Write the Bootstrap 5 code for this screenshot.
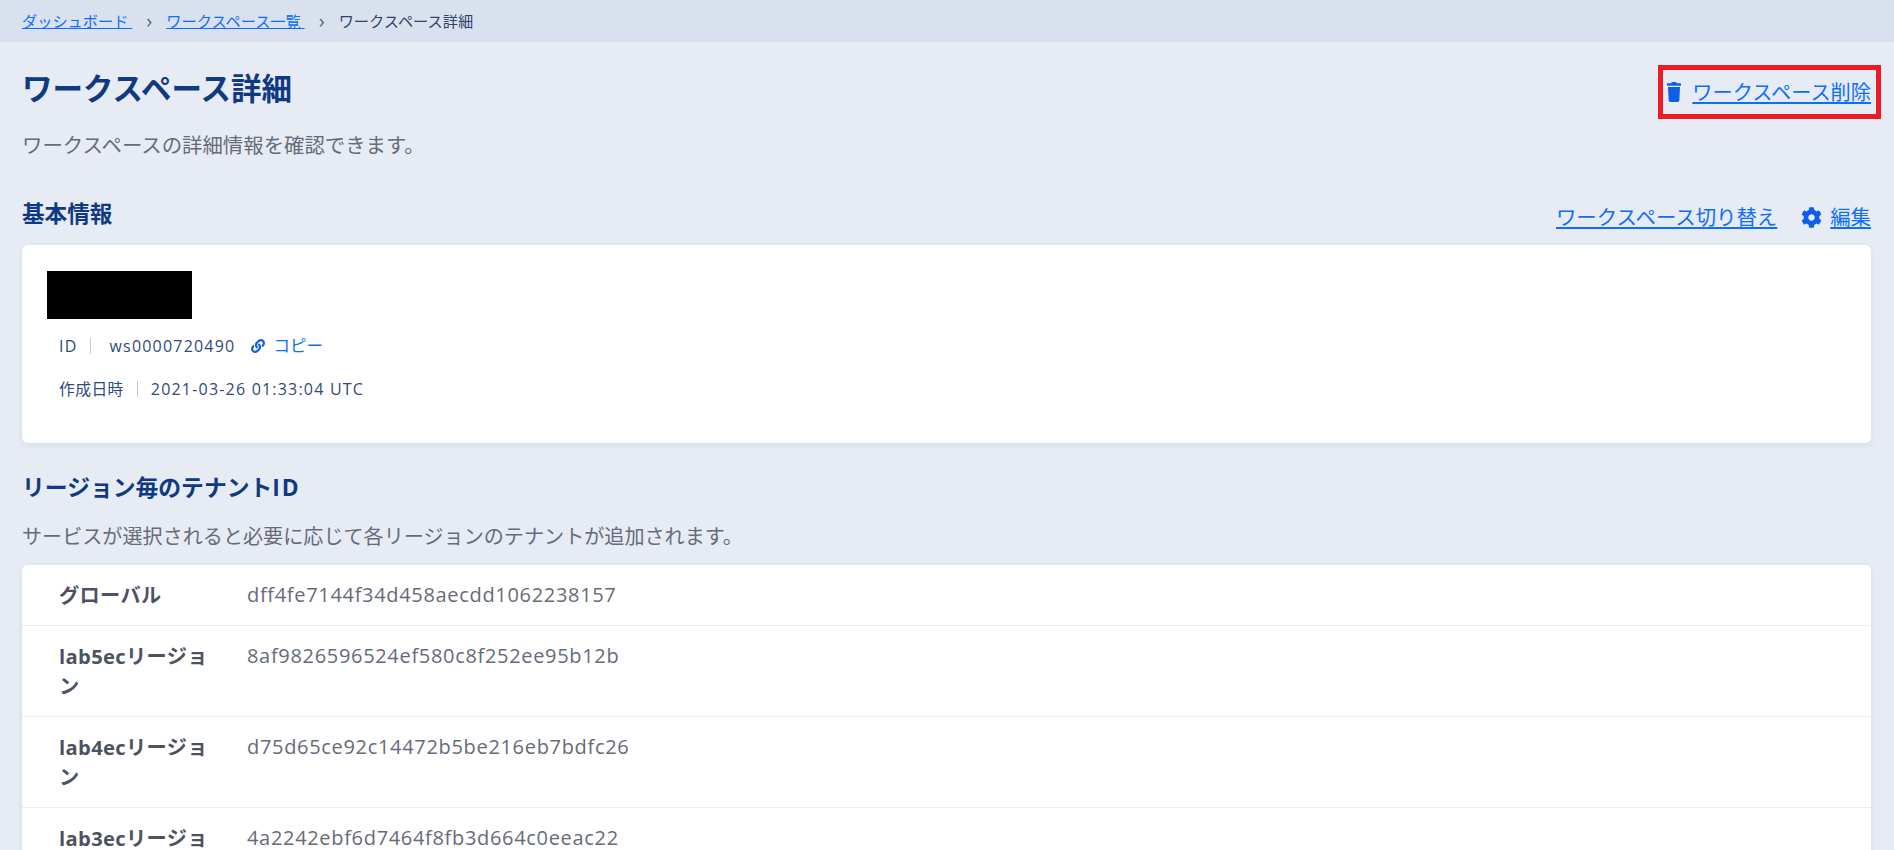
<!DOCTYPE html>
<html lang="ja">
<head>
<meta charset="utf-8">
<title>ワークスペース詳細</title>
<link href="https://cdn.jsdelivr.net/npm/bootstrap@5.3.0/dist/css/bootstrap.min.css" rel="stylesheet">
<style>
body{background:#e6ebf4;font-family:"Open Sans","Noto Sans CJK JP",sans-serif;color:#666b7a}
a{color:#0d6efd}
.crumbs{background:#dae1ee;height:42px;padding:0 22px;align-items:center;margin:0;font-size:15.2px;--bs-breadcrumb-divider:'›';--bs-breadcrumb-divider-color:#5b6478;--bs-breadcrumb-item-padding-x:14px;--bs-breadcrumb-margin-bottom:0}
.crumbs .breadcrumb-item+.breadcrumb-item::before{font-size:20px;line-height:22px}
.crumbs .breadcrumb-item.active{color:#2f4468}
.pagebody{padding:0 23px 0 22px}
.pagehead{padding-top:22px;height:131px}
.pagetitle{font-size:30.5px;line-height:48px;font-weight:700;color:#0f3a82;margin:0}
.pagedesc{font-size:20.4px;line-height:30px;margin:18px 0 0}
.delbox{border:5px solid #ed1c24;height:54px;width:223px;margin:1px -10px 0 0;font-size:20.2px;padding:0 5px 0 4px}
.delbox a,.sechead a{white-space:nowrap}
.ico{fill:#0d5fe8;flex:none}
.sechead{height:72px;align-items:flex-start;padding-top:27px}
.secname{font-size:22.6px;line-height:28px;font-weight:700;color:#0f3a82;margin:0}
.secnav{font-size:20.4px;line-height:28px;padding-top:3px}
.infocard{height:198px;border:0;border-radius:6px;box-shadow:0 2px 6px rgba(40,60,110,.08);padding:26px 25px 0}
.redact{width:145px;height:48px;background:#000}
.metaline{font-size:15.8px;line-height:24px;color:#2f4a7c;padding-left:12px;letter-spacing:.4px}
.metaline a{text-decoration:none;letter-spacing:0;font-size:16.5px}
.metaid{margin-top:7px}
.metadate{margin-top:19px}
.metaval{font-size:16px;letter-spacing:1.2px}
.sep{width:1px;height:16px;background:#c5c8cf;margin:0 13px}
.sepwide{margin-right:18px}
.tenanthead{font-size:22.8px;line-height:30px;font-weight:700;color:#0f3a82;margin:0;padding-top:30px}
.tenanthead span{letter-spacing:2px}
.tenantdesc{font-size:20.1px;line-height:30px;margin:19px 0 0;height:43px}
.tenantcard{border:0;border-radius:6px 6px 0 0;box-shadow:0 2px 6px rgba(40,60,110,.08)}
.tenantrow{border-color:#e9edf4;padding:15px 37px;font-size:20px;line-height:30px;color:#666b7a}
.tenantlabel{width:160px;margin-right:28px;font-weight:700;color:#4d5263;flex:none;font-size:20.2px;letter-spacing:.35px}
.tenantid{letter-spacing:.68px}
</style>
</head>
<body class="vh-100 overflow-hidden">
<nav aria-label="breadcrumb">
  <ol class="breadcrumb crumbs d-flex">
    <li class="breadcrumb-item"><a href="#">ダッシュボード&nbsp;</a></li>
    <li class="breadcrumb-item"><a href="#">ワークスペース一覧&nbsp;</a></li>
    <li class="breadcrumb-item active" aria-current="page">ワークスペース詳細</li>
  </ol>
</nav>
<main class="pagebody">
  <div class="pagehead d-flex justify-content-between align-items-start">
    <div>
      <h1 class="pagetitle">ワークスペース詳細</h1>
      <p class="pagedesc">ワークスペースの詳細情報を確認できます。</p>
    </div>
    <div class="delbox d-flex align-items-center justify-content-between">
      <svg class="ico" width="14" height="20" viewBox="0 0 448 512" preserveAspectRatio="none" aria-hidden="true"><path d="M432 32H312l-9.4-18.7A24 24 0 0 0 281.1 0H166.8a23.72 23.72 0 0 0-21.4 13.3L136 32H16A16 16 0 0 0 0 48v32a16 16 0 0 0 16 16h416a16 16 0 0 0 16-16V48a16 16 0 0 0-16-16zM53.2 467a48 48 0 0 0 47.9 45h245.8a48 48 0 0 0 47.9-45L416 128H32z"/></svg>
      <a href="#">ワークスペース削除</a>
    </div>
  </div>
  <div class="sechead d-flex justify-content-between">
    <h2 class="secname">基本情報</h2>
    <div class="secnav d-flex align-items-center">
      <a href="#">ワークスペース切り替え</a>
      <svg class="ico ms-4 me-2" width="21" height="21" viewBox="0 0 512 512" aria-hidden="true"><path d="M487.4 315.7l-42.6-24.6c4.3-23.2 4.3-47 0-70.2l42.6-24.6c4.9-2.8 7.1-8.6 5.5-14-11.1-35.6-30-67.8-54.7-94.6-3.8-4.1-10-5.1-14.8-2.3L380.8 110c-17.9-15.4-38.5-27.3-60.8-35.1V25.8c0-5.6-3.9-10.5-9.4-11.7-36.7-8.2-74.3-7.8-109.2 0-5.5 1.2-9.4 6.1-9.4 11.7V75c-22.2 7.9-42.8 19.8-60.8 35.1L88.7 85.5c-4.9-2.8-11-1.9-14.8 2.3-24.7 26.7-43.6 58.9-54.7 94.6-1.7 5.4.6 11.2 5.5 14L67.3 221c-4.3 23.2-4.3 47 0 70.2l-42.6 24.6c-4.9 2.8-7.1 8.6-5.5 14 11.1 35.6 30 67.8 54.7 94.6 3.8 4.1 10 5.1 14.8 2.3l42.6-24.6c17.9 15.4 38.5 27.3 60.8 35.1v49.2c0 5.6 3.9 10.5 9.4 11.7 36.7 8.2 74.3 7.8 109.2 0 5.5-1.2 9.4-6.1 9.4-11.7v-49.2c22.2-7.9 42.8-19.8 60.8-35.1l42.6 24.6c4.9 2.8 11 1.9 14.8-2.3 24.7-26.7 43.6-58.9 54.7-94.6 1.5-5.5-.7-11.3-5.6-14.1zM256 336c-44.1 0-80-35.9-80-80s35.9-80 80-80 80 35.9 80 80-35.9 80-80 80z"/></svg>
      <a href="#">編集</a>
    </div>
  </div>
  <section class="card infocard">
    <div class="redact"></div>
    <div class="metaline metaid d-flex align-items-center pt-2">
      <span class="metaval">ID</span><span class="sep sepwide"></span><span class="metaval">ws0000720490</span>
      <svg class="ico ms-3 me-2" width="14" height="14" viewBox="0 0 512 512" aria-hidden="true"><path d="M326.612 185.391c59.747 59.809 58.927 155.698.36 214.59-.11.12-.24.25-.36.37l-67.2 67.2c-59.27 59.27-155.699 59.262-214.96 0-59.27-59.26-59.27-155.7 0-214.96l37.106-37.106c9.84-9.84 26.786-3.3 27.294 10.606.648 17.722 3.826 35.527 9.69 52.721 1.986 5.822.567 12.262-3.783 16.612l-13.087 13.087c-28.026 28.026-28.905 73.66-1.155 101.96 28.024 28.579 74.086 28.749 102.325.51l67.2-67.19c28.191-28.191 28.073-73.757 0-101.83-3.701-3.694-7.429-6.564-10.341-8.569a16.037 16.037 0 0 1-6.947-12.606c-.396-10.567 3.348-21.456 11.698-29.806l21.054-21.055c5.521-5.521 14.182-6.199 20.584-1.731a152.482 152.482 0 0 1 20.522 17.197zM467.547 44.449c-59.261-59.262-155.69-59.27-214.96 0l-67.2 67.2c-.12.12-.25.25-.36.37-58.566 58.892-59.387 154.781.36 214.59a152.454 152.454 0 0 0 20.521 17.196c6.402 4.468 15.064 3.789 20.584-1.731l21.054-21.055c8.35-8.35 12.094-19.239 11.698-29.806a16.037 16.037 0 0 0-6.947-12.606c-2.912-2.005-6.64-4.875-10.341-8.569-28.073-28.073-28.191-73.639 0-101.83l67.2-67.19c28.239-28.239 74.3-28.069 102.325.51 27.75 28.3 26.872 73.934-1.155 101.96l-13.087 13.087c-4.35 4.35-5.769 10.79-3.783 16.612 5.864 17.194 9.042 34.999 9.69 52.721.509 13.906 17.454 20.446 27.294 10.606l37.106-37.106c59.271-59.259 59.271-155.699.001-214.959z"/></svg>
      <a href="#">コピー</a>
    </div>
    <div class="metaline metadate d-flex align-items-center">
      <span>作成日時</span><span class="sep"></span><span class="metaval">2021-03-26 01:33:04 UTC</span>
    </div>
  </section>
  <h2 class="tenanthead">リージョン毎のテナント<span>ID</span></h2>
  <p class="tenantdesc">サービスが選択されると必要に応じて各リージョンのテナントが追加されます。</p>
  <section class="card tenantcard list-group list-group-flush">
    <div class="list-group-item tenantrow d-flex"><div class="tenantlabel">グローバル</div><div class="tenantid">dff4fe7144f34d458aecdd1062238157</div></div>
    <div class="list-group-item tenantrow d-flex"><div class="tenantlabel">lab5ecリージョン</div><div class="tenantid">8af9826596524ef580c8f252ee95b12b</div></div>
    <div class="list-group-item tenantrow d-flex"><div class="tenantlabel">lab4ecリージョン</div><div class="tenantid">d75d65ce92c14472b5be216eb7bdfc26</div></div>
    <div class="list-group-item tenantrow d-flex"><div class="tenantlabel">lab3ecリージョン</div><div class="tenantid">4a2242ebf6d7464f8fb3d664c0eeac22</div></div>
  </section>
</main>
<script src="https://cdn.jsdelivr.net/npm/bootstrap@5.3.0/dist/js/bootstrap.bundle.min.js"></script>
</body>
</html>
